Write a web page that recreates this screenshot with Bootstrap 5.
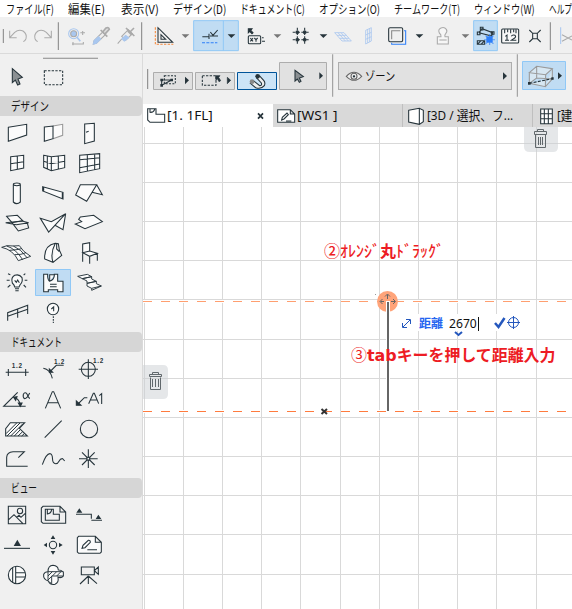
<!DOCTYPE html>
<html lang="ja">
<head>
<meta charset="utf-8">
<meta name="viewport" content="width=device-width, initial-scale=1">
<title>1. 1FL</title>
<link href="https://cdn.jsdelivr.net/npm/bootstrap@5.3.0/dist/css/bootstrap.min.css" rel="stylesheet">
<style>
body{width:572px;height:609px;overflow:hidden;background:#f0f0f0;color:#111;font-family:"Noto Sans","Noto Sans CJK JP",sans-serif;font-size:12px;line-height:1}
svg{display:block;overflow:visible;fill:none;stroke:#26343b;stroke-width:3.2;flex:none}
.jp{font-family:"Noto Sans CJK JP",sans-serif}
.fit{display:inline-block;white-space:nowrap;transform-origin:0 50%}
.slot{flex:none;white-space:nowrap}
.menus{height:17px;padding-left:6px;background:#fff}
.tools{height:36px}
.tools>*{flex:none}
.rule{border-top:1px solid #dadada}
.palette{width:143px;border-right:1px solid #dadada}
.head{height:20px;background:#d6d6d6;border-radius:0 4px 4px 0;padding-left:11px}
.cells{display:grid;grid-template-columns:repeat(3,36px);grid-auto-rows:30px;margin-left:-1px}
.cells svg{width:36px;height:30px;fill:#fbfbfb}
.cells .n{fill:none}
.d{fill:#26343b!important}
.g{stroke:#aaa}
.bl{stroke:#2d7ff9}
.pb{stroke:#a9c7ef}
.info{height:50px;padding:7px 0 0 4px}
.info>*{flex:none}
.ib{background:#e1e1e1;border:1px solid #adadad}
.tabs{height:23px;background:#d9d9d9;font-size:13px}
.tab1{width:130px;background:#fff}
.tab2{width:129px}
.tab3{width:130px;border-left:1px solid #bfbfbf}
.tab4{width:40px;border-left:1px solid #bfbfbf}
.view{height:482px;background:#fff}
.over{position:absolute}
.red{color:#ed1c24;white-space:nowrap}
.val{color:#111;background:#fff;width:30px}
.blue{color:#2565f0}
</style>
</head>
<body>
<nav class="menus d-flex align-items-center jp overflow-hidden">
<span class="slot" style="width:62px"><span class="fit" data-w="48">ファイル(F)</span></span>
<span class="slot" style="width:53px"><span class="fit" data-w="37">編集(E)</span></span>
<span class="slot" style="width:52px"><span class="fit" data-w="38">表示(V)</span></span>
<span class="slot" style="width:67px"><span class="fit" data-w="53">デザイン(D)</span></span>
<span class="slot" style="width:79px"><span class="fit" data-w="65">ドキュメント(C)</span></span>
<span class="slot" style="width:75px"><span class="fit" data-w="61">オプション(O)</span></span>
<span class="slot" style="width:80px"><span class="fit" data-w="66">チームワーク(T)</span></span>
<span class="slot" style="width:75px"><span class="fit" data-w="61">ウィンドウ(W)</span></span>
<span class="slot"><span class="fit" data-w="23">ヘルプ</span></span>
</nav>

<div class="tools d-flex overflow-hidden">
<svg width="5" height="36" viewBox="0 51 15 108"><path d="M10 87V129" stroke="#888"/></svg>
<svg width="26" height="36" viewBox="15 51 78 108" class="g"><path d="M29 92V113H50M30 112L44 97Q56 87 69 93Q82 102 78 116Q75 122 70 125"/></svg>
<svg width="25" height="36" viewBox="93 51 75 108" class="g"><path d="M154 92V113H133M153 112L139 97Q127 87 114 93Q101 102 105 116Q108 122 113 125"/></svg>
<svg width="5" height="36" viewBox="168 51 15 108"><path d="M175 67V150" stroke="#888"/></svg>
<svg width="28" height="36" viewBox="183 51 84 108"><circle cx="221" cy="101" r="15" class="pb"/><circle cx="221" cy="101" r="9" fill="#a9c7ef" stroke="#aaa"/><path d="M231 112L241 124" class="pb" stroke-width="5"/><path class="g" d="M241 98H255M248 93V105M219 126V136M216 132H250V126"/></svg>
<svg width="24" height="36" viewBox="267 51 72 108" class="g"><path d="M280 132L282 122L308 96L316 104L289 130Z" fill="#eee"/><path d="M280 132L283 121L296 110L302 117L289 130Z" fill="#a9c7ef" stroke="#a9c7ef"/><path d="M302 90L322 110M308 96L318 84Q326 80 328 88L316 101" fill="#ddd" stroke-width="5"/></svg>
<svg width="26" height="36" viewBox="339 51 78 108" class="g"><path d="M353 131L365 117M365 109L385 89L397 101L377 121Z" fill="#eee"/><path d="M366 116L377 106L386 113L373 123Z" fill="#a9c7ef" stroke="#a9c7ef"/><path d="M378 84L403 108M390 96L402 84M383 93L395 105" stroke-width="5"/></svg>
<svg width="5" height="36" viewBox="417 51 15 108"><path d="M425 67V150" stroke="#888"/></svg>
<svg width="34" height="36" viewBox="432 51 102 108"><path d="M466 82V133H520" stroke="#f5893c" stroke-dasharray="7 4"/><path d="M474 83V127H518ZM483 104V118H497Z"/></svg>
<svg width="15" height="36" viewBox="534 51 45 108"><path d="M545 103H568L556 114Z" fill="#777" stroke="none"/></svg>
<svg width="46" height="36" viewBox="579 51 138 108"><path d="M581 62H715V152H581ZM670 62V152" fill="#c0dcf3" stroke="#90c8f6" stroke-width="3"/><path d="M607 110H627M627 101V117M630 108H654M631 96L639 106L653 90"/><path class="bl" d="M606 128H652" stroke-dasharray="9 4"/><path d="M683 103H706L694 114Z" class="d" stroke="none"/></svg>
<svg width="31" height="36" viewBox="717 51 93 108"><path class="d" d="M745 86H756L752 91L759 98L756 101L749 94L745 98Z"/><rect x="745" y="107" width="37" height="24" rx="3"/><path d="M751 114L759 124M759 114L751 124M763 114L768 119L773 114M768 119V125M786 113H791M786 124H795"/></svg>
<svg width="16" height="36" viewBox="810 51 48 108"><path d="M821 103H844L832 114Z" fill="#777" stroke="none"/></svg>
<svg width="30" height="36" viewBox="18 51 90 108"><path d="M52 83V132M74 83V132M38 97H88M38 119H88" stroke-dasharray="9 4"/><path class="d" d="M49 94h6v6h-6ZM71 94h6v6h-6ZM49 116h6v6h-6ZM71 116h6v6h-6Z"/></svg>
<svg width="14" height="36" viewBox="108 51 42 108"><path d="M119 103H142L130 114Z" class="d" stroke="none"/></svg>
<svg width="28" height="36" viewBox="150 51 84 108" class="pb"><path d="M164 98H192L214 123H186ZM171 106H199M179 115H207M174 98L196 123M183 98L205 123" stroke-width="2.500"/></svg>
<svg width="22" height="36" viewBox="234 51 66 108" class="pb"><path d="M257 91L274 83V123L257 132ZM263 88V129M269 86V126M257 105L274 97M257 118L274 110" stroke-width="2.500"/></svg>
<svg width="31" height="36" viewBox="300 51 93 108"><path class="bl" d="M372 92H377V133H335V128"/><rect x="326" y="83" width="42" height="42" rx="4"/><path d="M335 118V92H361" stroke="#888"/></svg>
<svg width="16" height="36" viewBox="393 51 48 108"><path d="M407 103H430L418 114Z" class="d" stroke="none"/></svg>
<svg width="29" height="36" viewBox="441 51 87 108" class="g"><path d="M472 132V110H483Q484 104 478 99Q473 88 483 84Q493 80 499 88Q503 95 497 101Q493 105 495 110H505V132Z" fill="#f6f6f6"/><path d="M478 120H500"/></svg>
<svg width="17" height="36" viewBox="528 51 51 108"><path d="M545 103H568L556 114Z" fill="#777" stroke="none"/></svg>
<svg width="25" height="36" viewBox="579 51 75 108"><path d="M581 62H652V152H581Z" fill="#c0dcf3" stroke="#90c8f6" stroke-width="3"/><path d="M597 98L606 86L638 98L635 108L597 98"/><path d="M592 96h8v8h-8ZM601 82h8v8h-8ZM634 95h8v8h-8ZM592 122H614V133H592ZM592 133L603 122M603 133L614 122"/><path d="M619 109h19v19h-19Z" fill="#2d7ff9" stroke="none"/><path class="bl" d="M629 103V135M613 119H645M617 107L640 131M640 107L617 131" stroke-dasharray="4 2"/></svg>
<svg width="26" height="36" viewBox="654 51 78 108"><rect x="665" y="87" width="51" height="42" rx="3" fill="#f8f8f8"/><path d="M674 88V100M683 88V97M692 88V100M701 88V97M708 88V100"/><path d="M676 109L681 105V121M675 121H687M694 109Q697 103 705 106Q710 111 701 116L694 121H709"/></svg>
<svg width="22" height="36" viewBox="732 51 66 108"><path d="M748 90L758 100H772L782 90M748 126L758 116V100M782 126L772 116V100M758 116H772"/></svg>
<svg width="9" height="36" viewBox="798 51 27 108"><path d="M811 67V150" stroke="#888"/></svg>
<svg width="17" height="36" viewBox="825 51 51 108"><path class="pb" d="M842 82V132"/><path class="g" d="M846 104L876 120M846 124L876 108"/></svg>
</div>

<div class="rule d-flex">
<aside class="palette">
<svg width="142" height="42" viewBox="0 12 426 126"><path d="M129 25H294" stroke="#888"/><path d="M37 56V98L46 90L53 105L60 102L54 87L67 82Z" fill="#8b9093"/><rect x="133" y="62" width="55" height="42" stroke-dasharray="7 4"/></svg>
<div class="head d-flex align-items-center jp"><span class="fit" data-w="38">デザイン</span></div>
<div class="cells" style="margin-top:2px">
<svg viewBox="-3 69 108 90"><path d="M25 97L80 88V120L25 139Z"/></svg>
<svg viewBox="105 69 108 90"><path d="M159 93L188 88V121L159 131" stroke="#999"/><path d="M133 96L159 93V131L133 139Z"/></svg>
<svg viewBox="213 69 108 90"><path d="M254 87L283 85V138L254 146ZM258 112L266 109"/></svg>
<svg viewBox="-3 159 108 90"><path d="M32 185L71 181V219L32 227ZM52 183V223M32 206L71 200"/></svg>
<svg viewBox="105 159 108 90"><path d="M131 181L154 185L194 181V218L154 227L131 217ZM142 183V222M154 185V227M175 183V222M131 199L154 206L194 199"/></svg>
<svg viewBox="213 159 108 90"><path d="M239 181L299 176V221L239 233ZM262 179V229M284 177V224M239 194L299 188M239 218L299 207"/></svg>
<svg viewBox="-3 249 108 90"><path d="M40 269V321Q50 331 61 321V269"/><ellipse cx="50.500" cy="268" rx="10.500" ry="4"/></svg>
<svg viewBox="105 249 108 90"><path d="M128 275L189 292V312L128 288ZM131 275V287M187 293V312"/></svg>
<svg viewBox="213 249 108 90"><path d="M241 269H290L260 319L227 300ZM290 269L307 299L276 292"/></svg>
<svg viewBox="-3 9 108 90"><path d="M20 34L52 31L68 47L36 53Z"/><path class="n" d="M17 53L66 48L86 53L49 59ZM49 59L82 54L86 69L55 78L36 53"/></svg>
<svg viewBox="105 9 108 90"><path d="M121 40L154 50L197 26L146 81ZM197 26L189 74L165 61"/></svg>
<svg viewBox="213 9 108 90"><path d="M241 36L281 31L307 50L255 71L226 57L245 50L236 43Z"/></svg>
<svg viewBox="-3 99 108 90"><path stroke-width="2.800" d="M5 127Q20 119 40 123L58 122Q68 140 92 154L55 167Q39 134 5 127ZM20 123Q47 131 68 164M40 123Q63 132 82 159M28 136Q50 135 65 131M44 149Q64 150 78 143"/></svg>
<svg viewBox="105 99 108 90"><path d="M134 162Q132 121 166 115L175 116Q176 135 185 151L159 172ZM166 115Q150 145 159 172M170 116V132L178 140"/></svg>
<svg viewBox="213 99 108 90"><path d="M248 147V117L269 113V139M248 143L269 138L292 145L269 154ZM248 147V170M269 154V176M292 146V167"/></svg>
<svg viewBox="-3 189 108 90"><path d="M44 246Q43 240 37 234Q32 218 44 211Q58 206 66 218Q69 231 61 238L57 246ZM45 251H57M46 257H56M44 226L49 232L53 225L58 233M31 209L24 206M20 226H29M31 240L23 247M71 210L76 206M74 226H82M71 240L78 247"/></svg>
<svg viewBox="105 189 108 90"><path d="M106.500 193.500H211.500V271.500H106.500Z" fill="#c0dcf3" stroke="#90c8f6" stroke-width="3"/><path d="M131 208H143V216Q145 228 149 229Q163 224 163 211V208H173V229H189V260H173V254H145V260H131ZM149 229V209H163M150 238H170M150 245H170"/></svg>
<svg viewBox="213 189 108 90"><path stroke-width="2.800" d="M233 214L262 208L275 215L247 221ZM247 221L275 215V222L289 229L261 235V228ZM261 235L289 229V236L304 243L275 250L261 243ZM275 250V256L304 243"/></svg>
<svg viewBox="-3 279 108 90"><path class="n" d="M23 347V323L83 301V327M23 334L83 313M53 312V338"/></svg>
<svg viewBox="105 279 108 90"><circle cx="159" cy="312" r="17"/><path class="n" d="M154 312L161 306V319"/><path d="M160 334V354" stroke-dasharray="5 3"/></svg>
</div>
<div class="head d-flex align-items-center jp" style="margin-top:4px"><span class="fit" data-w="51">ドキュメント</span></div>
<div class="cells" style="margin-top:3px">
<svg viewBox="-3 90 108 90"><path class="n" d="M17 142H86M25 132V153M77 132V153"/><text x="35" y="128" font-size="19" font-weight="700" font-family="Liberation Sans" class="d" stroke="none" textLength="31">1.2</text></svg>
<svg viewBox="105 90 108 90"><path class="n" d="M130 130Q150 133 157 160M149 141L169 121H191"/><path class="d" d="M148 132V142H158Z"/><text x="162" y="116" font-size="19" font-weight="700" font-family="Liberation Sans" class="d" stroke="none" textLength="31">1.2</text></svg>
<svg viewBox="213 90 108 90"><circle class="n" cx="265" cy="133" r="21"/><path class="n" d="M236 133H294M265 103V162"/><text x="279" y="114" font-size="19" font-weight="700" font-family="Liberation Sans" class="d" stroke="none" textLength="31">1.2</text></svg>
<svg viewBox="-3 180 108 90"><path class="n" d="M77 244H11L53 202M43 217Q58 222 61 241M89 204Q81 221 74 221Q68 218 70 208Q75 199 81 207Q86 220 90 220"/><path class="d" d="M41 217L51 215L47 226ZM55 234L61 244L66 234Z"/></svg>
<svg viewBox="105 180 108 90"><path class="n" d="M136 250L157 200H161L182 250M143 233H176"/></svg>
<svg viewBox="213 180 108 90"><path class="n" d="M234 237L253 218H262M266 236L280 205H283L296 236M271 225H291M298 212L305 206V237"/><path class="d" d="M229 228V241H243Z"/></svg>
<svg viewBox="-3 270 108 90"><path d="M31 293H74L58 310L82 333H17V311Z"/><path d="M18 326L50 294M21 333L60 294M32 333L68 297M43 333L61 314M54 333L68 320M65 333L74 325" stroke-width="3"/></svg>
<svg viewBox="105 270 108 90"><path d="M134 338L185 287"/></svg>
<svg viewBox="213 270 108 90"><circle class="n" cx="267" cy="312" r="26"/></svg>
<svg viewBox="-3 360 108 90"><path class="n" d="M83 424H20V397Q21 381 39 380H73L55 398"/></svg>
<svg viewBox="105 360 108 90"><path class="n" d="M127 419Q139 384 151 386C164 389 150 416 167 416C180 416 174 400 188 401L194 408"/></svg>
<svg viewBox="213 360 108 90"><path class="n" d="M237 401H293M265 373V429M246 382L284 420M284 382L246 420"/><rect x="261" y="397" width="8" height="8"/></svg>
</div>
<div class="head d-flex align-items-center jp" style="margin-top:3px"><span class="fit" data-w="26">ビュー</span></div>
<div class="cells" style="margin-top:2px">
<svg viewBox="-3 90 108 90"><path class="n" d="M25 109H77V161H25ZM26 149L42 134L68 160M49 143L57 136L63 142L76 130"/><circle class="n" cx="60" cy="123" r="8"/></svg>
<svg viewBox="105 90 108 90"><path class="n" d="M129 109H180L197 126V160H129L124 155V114ZM180 109V126H197M136 118H160V133H178V151H136ZM142 118V132Q153 131 155 119"/></svg>
<svg viewBox="213 90 108 90"><path class="n" d="M228 133H274V146M274 151H306"/><path class="d" stroke="none" d="M229 128L238 115L247 128ZM287 147L295 134L304 147Z"/></svg>
<svg viewBox="-3 180 108 90"><path d="M12 235H90"/><path class="d" stroke="none" d="M41 228L52 209L63 228Z"/></svg>
<svg viewBox="105 180 108 90"><circle class="n" cx="159" cy="225" r="11"/><path class="d" stroke="none" d="M152 207L159 196L166 207ZM152 243L159 254L166 243ZM141 218L131 225L141 232ZM177 218L188 225L177 232Z"/></svg>
<svg viewBox="213 180 108 90"><path d="M236 199H286L304 217V246L300 250H236L232 246V203ZM286 199V217H304M262 239H291M246 235L249 226L265 211Q271 210 271 217L255 233Z"/></svg>
<svg viewBox="-3 270 108 90"><circle cx="51" cy="315" r="26"/><path d="M38 292V338M47 289V341M47 308H76M47 321H76"/></svg>
<svg viewBox="105 270 108 90"><path d="M144 305Q144 287 159 286Q174 287 175 300Q193 300 190 318Q185 325 174 322Q177 337 165 343Q151 346 145 333Q129 328 131 313Q134 305 144 305Z"/><path stroke-width="2.800" d="M144 305H190V318H155V341L144 333ZM144 318L157 305M157 318L170 305M170 318L183 305M144 330L155 319"/></svg>
<svg viewBox="213 270 108 90"><path class="n" d="M244 291H283V314H244ZM283 302L295 291V313ZM265 318V342M265 318L240 342M265 318L291 341"/></svg>
</div>
</aside>

<main class="flex-grow-1">
<div class="info d-flex overflow-hidden">
<svg width="6" height="36" viewBox="0 0 18 108"><path d="M2 24V84" stroke="#888"/></svg>
<div style="padding-top:11px"><svg width="42" height="18" viewBox="459 66 126 54"><path d="M460.500 67.500H577.500V118.500H460.500Z" fill="#e1e1e1" stroke="#adadad" stroke-width="3"/><path d="M493 77H526V101H493Z" stroke-dasharray="6 4"/><path d="M485 106V90H515L485 106"/><path class="d" stroke="none" d="M481 86h8v8h-8ZM511 86h8v8h-8ZM481 102h8v8h-8ZM555 80V103L567 91Z"/></svg></div>
<div style="padding-top:11px"><svg width="42" height="18" viewBox="585 66 126 54"><path d="M586.500 67.500H703.500V118.500H586.500Z" fill="#e1e1e1" stroke="#adadad" stroke-width="3"/><path d="M607 77H648V106H607Z" stroke-dasharray="7 4"/><path class="d" d="M647 77L660 77L656 82L662 92L657 95L652 86L648 91ZM682 82V101L692 91Z" stroke-width="2"/></svg></div>
<div style="padding-top:11px"><svg width="42" height="18" viewBox="711 66 126 54"><path d="M712.500 67.500H829.500V118.500H712.500Z" fill="#cce4f7" stroke="#00549a" stroke-width="3"/><path d="M769 83L784 99Q787 107 779 107L760 92L751 100L767 113Q783 119 793 107Q797 98 791 91L778 77" fill="#eee"/><circle cx="773" cy="79" r="7" class="d" stroke="none"/><circle cx="756" cy="95" r="7" fill="#888" stroke="none"/></svg></div>
<svg width="59" height="29" viewBox="-3 33 177 87"><path d="M-1.500 37.500H139.500V118.500H-1.500Z" fill="#e1e1e1" stroke="#adadad" stroke-width="3"/><path d="M45 61V93L52 87L58 97L63 94L58 84L70 80Z" fill="#8b9093"/><path class="d" d="M118 67V88L129 77Z" stroke="none"/><path d="M158 13V140" stroke="#999"/></svg>
<div class="ib d-flex align-items-center" style="width:174px;height:28px;margin-top:1px;padding-left:7px">
<svg width="17" height="12" viewBox="198 60 51 36"><path d="M199 79Q222 55 245 79Q222 103 199 79Z" fill="#eee" stroke="#666"/><circle cx="222" cy="79" r="9" stroke="#666"/><circle cx="222" cy="79" r="2" class="d"/></svg>
<span class="jp slot" style="margin-left:2px"><span class="fit" data-w="30">ゾーン</span></span>
<svg class="ms-auto me-1" width="4" height="8" viewBox="0 0 12 24"><path class="d" d="M0 1V23L12 12Z" stroke="none"/></svg>
</div>
<svg width="54" height="29" viewBox="696 33 162 87"><path d="M712 13V140" stroke="#999"/><path d="M727.500 34.500H856.500V118.500H727.500Z" fill="#c0dcf3" stroke="#90c8f6" stroke-width="3"/><path d="M748 68L770 49L817 56L797 74ZM748 68V100L796 110L797 74M817 56V87L796 110M748 100L770 84L817 87M770 49V84" stroke="#999" fill="#d7e7f2"/><path d="M748 100L817 86" stroke-dasharray="9 4"/><path class="d" d="M744 96h8v8h-8ZM814 82h7v7h-7ZM834 67V88L846 77Z" stroke="none"/></svg>
</div>

<div class="tabs d-flex overflow-hidden">
<div class="tab1 d-flex align-items-center"><svg width="24" height="23" viewBox="429 162 72 69"><path d="M443 176H450V187Q461 188 464 178V176H468V193H494V217H450L443 210ZM450 187V176H464"/></svg><span class="fit" data-w="46">[1. 1FL]</span><svg class="ms-auto" width="18" height="23" viewBox="765 162 54 69"><path d="M774 190L789 206M789 190L774 206" stroke-width="5"/></svg></div>
<div class="tab2 d-flex align-items-center"><svg width="24" height="23" viewBox="-21 162 72 69"><path d="M-7 179H31L44 192V217H-7ZM31 179V192H44M5 210L7 202L21 189L25 194L12 207ZM18 213H34" fill="#fff"/></svg><span class="fit" data-w="41">[WS1 ]</span></div>
<div class="tab3 d-flex align-items-center"><svg width="24" height="23" viewBox="369 162 72 69"><path d="M386 181L418 175L430 181V215L418 223L386 216ZM418 175V223" fill="#fff"/></svg><span class="fit" data-w="86">[3D / 選択、フ...</span></div>
<div class="tab4 d-flex align-items-center"><svg width="24" height="23" viewBox="759 162 72 69"><path d="M782 177H817V221H782ZM793 177V221M805 177V221M782 191H817M782 206H817" fill="#fff"/></svg><span class="fit" data-w="15">[建</span></div>
</div>

<div class="view position-relative overflow-hidden">
<svg width="429" height="482" viewBox="143 127 429 482">
<path d="M144.500 127V609M183.500 127V609M222.500 127V609M261.500 127V609M300.500 127V609M340.500 127V609M379.500 127V609M418.500 127V609M457.500 127V609M496.500 127V609M536.500 127V609M143 143.500H572M143 182.500H572M143 221.500H572M143 260.500H572M143 299.500H572M143 339.500H572M143 378.500H572M143 417.500H572M143 456.500H572M143 495.500H572M143 534.500H572M143 574.500H572" stroke="#d9d9d9" stroke-width="1"/>
<path d="M143 301.500H572M143 411.500H572" stroke="#fff" stroke-width="3" stroke-dasharray="9 9"/>
<path d="M143 301.500H572" stroke="#ff9f70" stroke-width="1" stroke-dasharray="9 9"/>
<path d="M143 411.500H572" stroke="#ff7b3e" stroke-width="1" stroke-dasharray="9 9"/>
<circle cx="387.500" cy="301.500" r="10.500" fill="#ffa47a" stroke="none"/>
<path d="M387.500 299V294.500M385 296.500L387.500 294L390 296.500M384 301.500H380.500M382.500 299L380 301.500L382.500 304M391 301.500H395M393 299L395.500 301.500L393 304" stroke="#666" stroke-width="1"/>
<path d="M388 301V411" stroke="#fff" stroke-width="4"/><path d="M388 302V411" stroke="#666" stroke-width="2"/>
<path d="M375 294.500H376" stroke="#999" stroke-width="1"/>
<path d="M321.500 409L327 414M327 409L321.500 414" stroke="#333" stroke-width="2"/>
<path d="M524 127H558V147Q558 152 553 152H530Q524 152 524 147ZM143 365H163Q168 365 168 370V394Q168 399 163 399H143Z" fill="#ccd0d4" fill-opacity=".5" stroke="none"/>
<g stroke="#61686c" stroke-width="1"><path d="M535.500 134.500V147.500H545.500V134.500M534.500 131.500H546.500V134.500H534.500ZM537.500 131V129.500H543.500V131M538.500 137V145M540.500 137V145M542.500 137V145"/><path d="M150.500 377.500V389.500H160.500V377.500M149.500 374.500H161.500V376.500H149.500ZM152.500 374V372.500H158.500V374M152.500 379V387M155.500 379V387M158.500 379V387"/></g>
<rect x="400" y="314" width="122" height="17" fill="#fff" stroke="none"/>
<g stroke="#2457bd" stroke-width="1"><path d="M403 327L410 320M406 319.500H410.500V324M402.500 323V327.500H407"/><circle cx="513.500" cy="322.500" r="5"/><path d="M507 322.500H520M513.500 316V329"/><path d="M495 323L498.500 327L504.500 318" stroke-width="2.500"/><path d="M455 332L458.500 335L462 332" stroke-width="2"/></g>
</svg>
<div class="over red jp" style="left:181px;top:115px;font-size:16px;font-weight:500"><span class="fit" data-w="120">②ｵﾚﾝｼﾞ<b>丸</b>ﾄﾞﾗｯｸﾞ</span></div>
<div class="over blue jp fw-bold" style="left:276px;top:190px"><span class="fit" data-w="24">距離</span></div>
<div class="over val" style="left:306px;top:190px;font-size:13px;height:14px;border-right:1px solid #111"><span class="fit" data-w="28">2670</span></div>
<div class="over red jp fw-bold" style="left:208px;top:219px;font-size:16px"><span class="fit" data-w="204"><span class="fw-normal">③</span><span style="font-family:'DejaVu Sans',sans-serif">tab</span>キーを押して距離入力</span></div>
</div>
</main>
</div>
<script src="https://cdn.jsdelivr.net/npm/bootstrap@5.3.0/dist/js/bootstrap.bundle.min.js"></script>
<script>
document.querySelectorAll('.fit').forEach(function (e) {
  var w = e.offsetWidth, t = +e.dataset.w;
  e.style.transform = 'scaleX(' + t / w + ')';
  e.style.marginRight = (t - w) + 'px';
});
</script>
</body>
</html>
